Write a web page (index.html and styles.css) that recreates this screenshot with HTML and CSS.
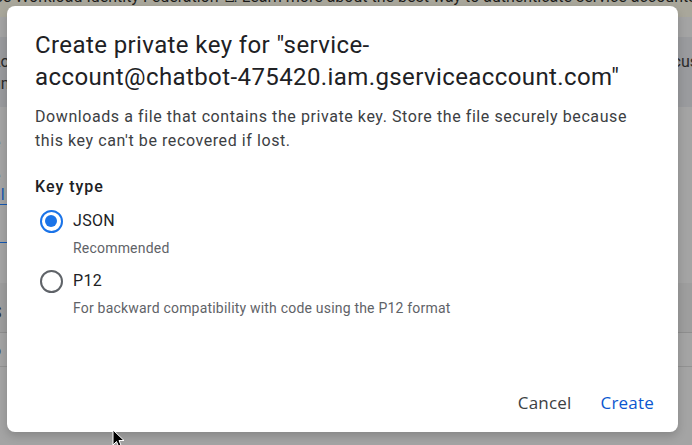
FILE: index.html
```html
<!DOCTYPE html>
<html lang="en">
<head>
<meta charset="utf-8">
<title>Create private key</title>
<link rel="stylesheet" href="styles.css">
</head>
<body>
<div class="page">
  <div class="banner"><span class="banner-text">Use Workload Identity Federation ⧉. Learn more about the best way to authenticate service accounts</span></div>
  <div class="gap-row"></div>
  <div class="dark-band">
    <div class="band-line"><span>Lo</span><span class="right-frag">cus</span></div>
    <div class="band-line"><span>un</span></div>
  </div>
  <div class="light-area">
    <div class="frag f1">e</div>
    <div class="frag f2">e</div>
    <div class="frag f3 link">al</div>
    <div class="frag f4 link">.</div>
  </div>
  <div class="dark-band2"><div class="frag f5">S</div></div>
  <div class="table-row"><div class="frag">o</div></div>
  <div class="rest"></div>
</div>

<div class="dialog" role="dialog">
  <h1 class="title">Create private key for "service-<span class="nowrap">account@chatbot-475420.iam.gserviceaccount.com"</span></h1>
  <p class="desc">Downloads a file that contains the private key. Store the file securely because this key can't be recovered if lost.</p>
  <div class="label">Key type</div>
  <div class="option">
    <span class="radio checked"></span>
    <div class="opt-text">
      <div class="opt-name">JSON</div>
      <div class="opt-hint">Recommended</div>
    </div>
  </div>
  <div class="option">
    <span class="radio"></span>
    <div class="opt-text">
      <div class="opt-name">P12</div>
      <div class="opt-hint">For backward compatibility with code using the P12 format</div>
    </div>
  </div>
  <div class="actions">
    <button class="btn cancel">Cancel</button>
    <button class="btn create">Create</button>
  </div>
</div>

<svg class="cursor" width="14" height="20" viewBox="0 0 14 20"><path d="M1 1 L1 16 L4.5 12.5 L7 18.5 L9.5 17.5 L7 11.5 L12 11.5 Z" fill="#000" stroke="#fff" stroke-width="1"/></svg>
</body>
</html>
```
FILE: styles.css
```css
html, body {
  margin: 0;
  padding: 0;
  width: 692px;
  height: 445px;
  overflow: hidden;
  font-family: Roboto, "Liberation Sans", Arial, sans-serif;
}

.page {
  width: 692px;
  height: 445px;
  background: #a4a4a4;
  display: flex;
  flex-direction: column;
  color: #2a2a2a;
  font-size: 14px;
  overflow: hidden;
}

.banner {
  height: 17px;
  background: #a9a79b;
  overflow: hidden;
  position: relative;
  flex-shrink: 0;
}

.banner-text {
  display: block;
  white-space: nowrap;
  font-size: 16px;
  line-height: 16px;
  margin-top: -11px;
  margin-left: -16px;
  color: #1d1d1b;
}

.gap-row {
  height: 20px;
  flex-shrink: 0;
}

.dark-band {
  height: 70px;
  background: #9a9b9e;
  flex-shrink: 0;
  padding-top: 14px;
  box-sizing: border-box;
}

.band-line {
  display: flex;
  justify-content: space-between;
  height: 22px;
  font-size: 16px;
  line-height: 22px;
  margin-left: -8px;
  margin-right: -6px;
  white-space: nowrap;
}

.light-area {
  height: 176px;
  flex-shrink: 0;
  position: relative;
}

.frag {
  font-size: 16px;
  margin-left: -8px;
  white-space: nowrap;
}

.f1 { margin-top: 26px; }
.f2 { margin-top: 14px; }
.link { color: #1557b0; }
.f3 { border-bottom: 1px solid #1557b0; width: 20px; }
.f4 { margin-top: 18px; border-bottom: 1px solid #1557b0; width: 20px; }

.dark-band2 {
  height: 50px;
  background: #9e9e9e;
  border-bottom: 1px solid #8e8e8e;
  flex-shrink: 0;
  box-sizing: border-box;
  padding-top: 20px;
}

.table-row {
  height: 34px;
  border-bottom: 1px solid #929292;
  box-sizing: border-box;
  padding-top: 8px;
  flex-shrink: 0;
}

.rest { flex: 1; }

.dialog {
  position: absolute;
  left: 7px;
  top: 6px;
  width: 671px;
  height: 426px;
  box-sizing: border-box;
  background: #fff;
  border-radius: 8px;
  box-shadow: 0 4px 10px rgba(0,0,0,0.18);
  padding: 23px 12px 10px 28px;
  display: flex;
  flex-direction: column;
}

.title {
  margin: 0;
  font-size: 24px;
  line-height: 32px;
  font-weight: 400;
  color: #202124;
  letter-spacing: 0.4px;
  padding-right: 16px;
}

.nowrap { white-space: nowrap; }

.desc {
  margin: 12px 0 0;
  font-size: 16px;
  line-height: 24px;
  color: #3c4043;
  letter-spacing: 0.58px;
  padding-right: 16px;
}

.label {
  margin-top: 22px;
  font-size: 16px;
  line-height: 24px;
  color: #202124;
  font-weight: 500;
  letter-spacing: 1px;
}

.option {
  display: flex;
  align-items: flex-start;
  margin-left: -4px;
}

.option + .option { margin-top: 3px; }
.label + .option { margin-top: 2px; }

.radio {
  width: 40px;
  height: 40px;
  flex-shrink: 0;
  display: flex;
  align-items: center;
  justify-content: center;
  position: relative;
}

.radio::before {
  content: "";
  width: 23px;
  height: 23px;
  border: 2px solid #5f6368;
  border-radius: 50%;
  box-sizing: border-box;
}

.radio.checked::before {
  border-color: #1a73e8;
}

.radio.checked::after {
  content: "";
  position: absolute;
  left: 14px;
  top: 14px;
  width: 12px;
  height: 12px;
  border-radius: 50%;
  background: #1a73e8;
}

.opt-text {
  padding-left: 2px;
}

.opt-name {
  font-size: 16px;
  line-height: 40px;
  color: #202124;
  letter-spacing: 0.3px;
}

.opt-hint {
  font-size: 14px;
  line-height: 20px;
  color: #5f6368;
  margin-top: -3px;
  letter-spacing: 0.2px;
}

.actions {
  margin-top: auto;
  display: flex;
  justify-content: flex-end;
  gap: 5px;
}

.btn {
  background: none;
  border: none;
  font-family: "Open Sans", Roboto, sans-serif;
  font-size: 17px;
  font-weight: 500;
  letter-spacing: 0.2px;
  height: 40px;
  padding: 0 12px;
  border-radius: 4px;
  cursor: pointer;
}

.cancel { color: #3c4043; }
.create { color: #0b57d0; }

.cursor {
  position: absolute;
  left: 112px;
  top: 429px;
}
```
